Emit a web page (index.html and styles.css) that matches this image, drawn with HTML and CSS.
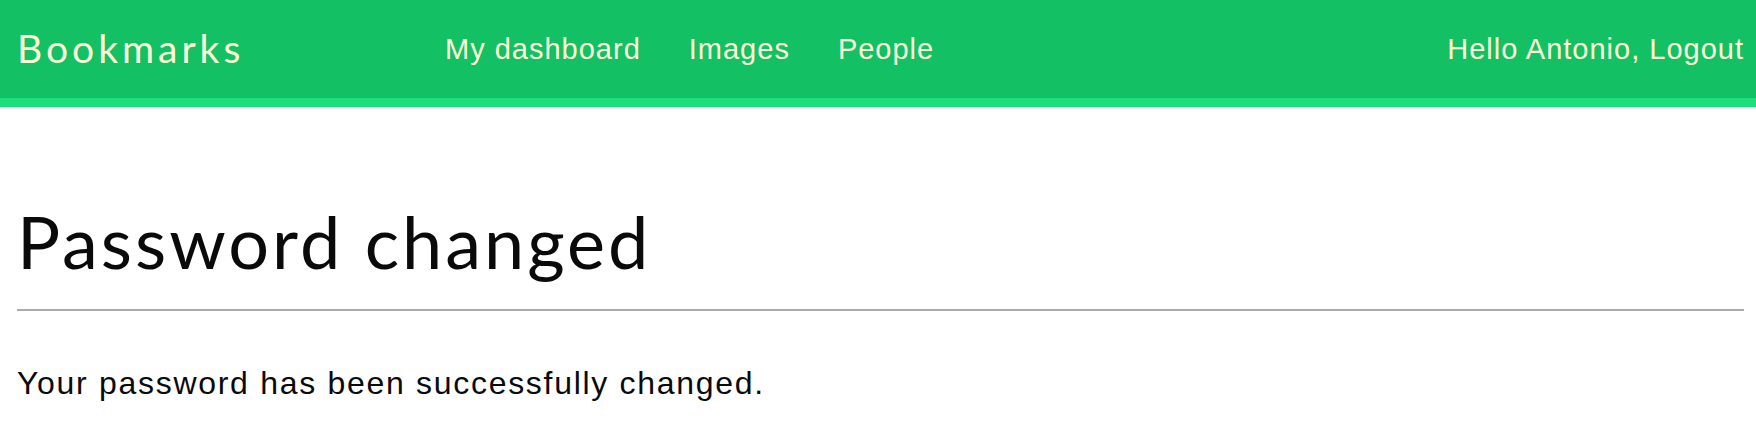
FILE: index.html
```html
<!DOCTYPE html>
<html lang="en">
<head>
<meta charset="utf-8">
<title>Password changed</title>
<link rel="stylesheet" href="styles.css">
</head>
<body>
<header class="header">
  <div class="logo">Bookmarks</div>
  <nav class="menu">
    <a class="menu-link" href="#">My dashboard</a>
    <a class="menu-link" href="#">Images</a>
    <a class="menu-link" href="#">People</a>
  </nav>
  <div class="user">Hello Antonio, <a class="menu-link" href="#">Logout</a></div>
</header>
<main class="content">
  <h1 class="title">Password changed</h1>
  <p class="message">Your password has been successfully changed.</p>
</main>
</body>
</html>
```
FILE: styles.css
```css
html, body {
  margin: 0;
  padding: 0;
  background: #ffffff;
}

.header {
  display: flex;
  align-items: center;
  height: 98px;
  padding: 0 12px 0 17px;
  background: #13c064;
  border-bottom: 9px solid #1ddf7a;
  color: #fdfbd6;
  font-family: "Liberation Sans", Arial, sans-serif;
}

.logo {
  flex: 0 0 428px;
  font-family: Lato, "Open Sans", sans-serif;
  font-size: 39px;
  letter-spacing: 4px;
  padding-bottom: 2px;
}

.menu {
  display: flex;
  gap: 48px;
}

.menu-link {
  color: #fdfbd6;
  text-decoration: none;
}

.menu, .user {
  font-size: 29px;
  letter-spacing: 1px;
}

.user {
  margin-left: auto;
}

.content {
  padding: 0 12px 0 17px;
}

.title {
  margin: 0;
  padding-top: 98px;
  padding-bottom: 32px;
  border-bottom: 2px solid #ababab;
  font-family: Lato, "Open Sans", sans-serif;
  font-weight: 400;
  font-size: 72px;
  line-height: 1;
  letter-spacing: 3px;
  color: #0a0a0a;
}

.message {
  margin: 53px 0 0;
  font-family: "Liberation Sans", Arial, sans-serif;
  font-size: 32px;
  line-height: 1.2;
  letter-spacing: 1.7px;
  color: #0a0a0a;
}
```
